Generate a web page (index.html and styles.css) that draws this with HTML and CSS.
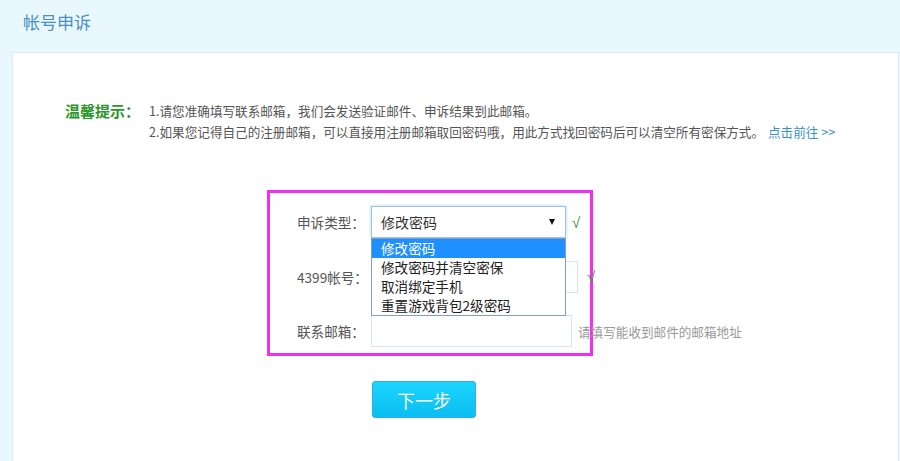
FILE: index.html
```html
<!DOCTYPE html>
<html lang="zh-CN">
<head>
<meta charset="utf-8">
<title>帐号申诉</title>
<link rel="stylesheet" href="styles.css">
</head>
<body>
<div class="page">
  <div class="head">帐号申诉</div>
  <div class="panel">
    <div class="tips">
      <div class="tips-label">温馨提示：</div>
      <div class="tips-text">
        <p>1.请您准确填写联系邮箱，我们会发送验证邮件、申诉结果到此邮箱。</p>
        <p>2.如果您记得自己的注册邮箱，可以直接用注册邮箱取回密码哦，用此方式找回密码后可以清空所有密保方式。<a class="link" href="#">点击前往 &gt;&gt;</a></p>
      </div>
    </div>
    <div class="form-box">
      <div class="row">
        <span class="label">申诉类型：</span>
        <div class="select">
          <span class="select-value">修改密码</span>
          <span class="arrow"></span>
          <ul class="options">
            <li class="opt active">修改密码</li>
            <li class="opt">修改密码并清空密保</li>
            <li class="opt">取消绑定手机</li>
            <li class="opt">重置游戏背包2级密码</li>
          </ul>
        </div>
        <span class="ok ok-1">√</span>
      </div>
      <div class="row">
        <span class="label">4399帐号：</span>
        <div class="input input-2"></div>
        <span class="ok ok-2">√</span>
      </div>
      <div class="row">
        <span class="label">联系邮箱：</span>
        <div class="input input-3"></div>
        <span class="hint">请填写能收到邮件的邮箱地址</span>
      </div>
    </div>
    <button class="next" type="button">下一步</button>
  </div>
</div>
</body>
</html>
```

FILE: styles.css
```css
* { box-sizing: border-box; }
html, body { margin: 0; padding: 0; }
body {
  background: #e9f8fe;
  font-family: "Noto Sans CJK SC", "Noto Sans", sans-serif;
  color: #555;
  width: 900px;
  height: 461px;
  overflow: hidden;
}
.page { display: flex; flex-direction: column; }
.head {
  height: 52px;
  padding-left: 23px;
  font-size: 17px;
  line-height: 43px;
  color: #4a8fc4;
}
.panel {
  margin-left: 12px;
  margin-right: 1px;
  height: 409px;
  background: #fff;
  border: 1px solid #d9ebf3;
  border-bottom: none;
  padding-top: 47px;
}
.tips {
  display: flex;
  padding-left: 52px;
}
.tips-label {
  font-size: 15px;
  font-weight: bold;
  color: #2b962b;
  line-height: 21px;
  margin-right: 9px;
  white-space: nowrap;
}
.tips-text p {
  margin: 0;
  font-size: 12.6px;
  line-height: 21px;
  color: #555;
  white-space: nowrap;
}
.link {
  color: #3b8fcb;
  text-decoration: none;
  margin-left: 4px;
}
.form-box {
  margin-top: 48px;
  margin-left: 254px;
  width: 326px;
  border: 3px solid #f22ef0;
  padding: 13px 0 6px 27px;
  display: flex;
  flex-direction: column;
  gap: 22.5px;
}
.row {
  display: flex;
  align-items: center;
  height: 32px;
  white-space: nowrap;
}
.label {
  width: 74px;
  flex: none;
  font-size: 13.6px;
  color: #555;
}
.select {
  position: relative;
  width: 195px;
  height: 32px;
  flex: none;
  border: 1px solid #9cc3e8;
  box-shadow: 0 0 3px rgba(110, 170, 230, 0.55);
  background: #fff;
  display: flex;
  align-items: center;
  padding: 0 9px 0 9px;
}
.select-value {
  flex: 1;
  font-size: 14px;
  color: #333;
}
.arrow {
  width: 0;
  height: 0;
  border-left: 3px solid transparent;
  border-right: 3px solid transparent;
  border-top: 6px solid #111;
  margin-right: 1px;
}
.options {
  position: absolute;
  left: -1px;
  top: 31px;
  width: 195px;
  margin: 0;
  padding: 0;
  list-style: none;
  background: #fff;
  border: 1px solid #7f9fc8;
  z-index: 5;
}
.opt {
  height: 19px;
  line-height: 19px;
  padding-left: 9px;
  font-size: 13.6px;
  color: #222;
}
.opt.active {
  background: #1e90ff;
  color: #fff;
}
.input {
  height: 32px;
  flex: none;
  border: 1px solid #d6e6f1;
  background: #fff;
}
.input-2 { width: 207px; }
.input-3 { width: 201px; }
.ok {
  color: #3d9b3d;
  font-family: "Liberation Sans", sans-serif;
  font-size: 15px;
}
.ok-1 { margin-left: 6px; }
.ok-2 { margin-left: 9px; }
.hint {
  margin-left: 6px;
  font-size: 12.6px;
  color: #999;
}
.next {
  display: block;
  margin-top: 25px;
  margin-left: 359px;
  width: 104px;
  height: 37px;
  border: 1px solid #28b1e2;
  border-radius: 3px;
  background: linear-gradient(#1cd5fe, #0bbdf1);
  color: #fff;
  font-family: "Noto Sans CJK SC", sans-serif;
  font-size: 18px;
  padding: 0;
}
```
